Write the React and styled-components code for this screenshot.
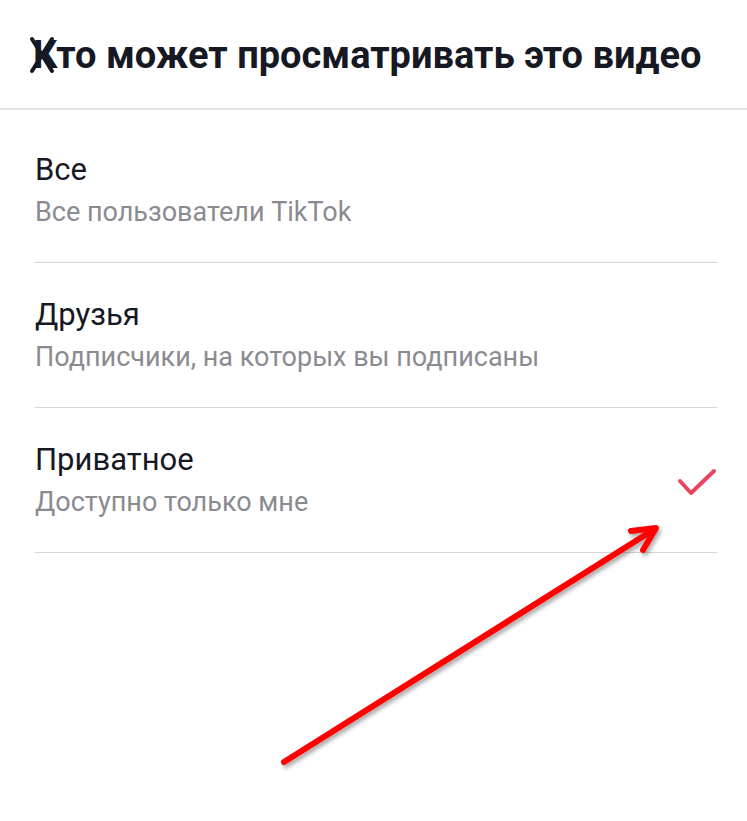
import React from "react";
import styled, { createGlobalStyle } from "styled-components";

const Global = createGlobalStyle`
  html, body {
    margin: 0;
    padding: 0;
    background: #ffffff;
    font-family: Roboto, "Noto Sans", sans-serif;
  }
`;

const Page = styled.div`
  position: relative;
  width: 747px;
  height: 821px;
  background: #fff;
  overflow: hidden;
`;

const Header = styled.div`
  position: relative;
  height: 110px;
  border-bottom: 2px solid #e3e3e4;
  display: flex;
  align-items: center;
  padding-left: 33px;
  box-sizing: border-box;
`;

const Title = styled.h1`
  margin: 0;
  font-size: 38px;
  font-weight: 700;
  color: #161823;
  letter-spacing: 0;
  padding-top: 2px;
`;

const CloseMark = styled.svg`
  position: absolute;
  left: 28px;
  top: 36px;
`;

const List = styled.div`
  padding: 8px 30px 0 35px;
`;

const Row = styled.div`
  display: flex;
  align-items: center;
  justify-content: space-between;
  height: 145px;
  border-bottom: 1px solid #d6d6d8;
  box-sizing: border-box;
`;

const Texts = styled.div`
  display: flex;
  flex-direction: column;
  gap: 8px;
`;

const Name = styled.div`
  font-size: 31px;
  color: #161823;
  line-height: 36px;
`;

const Hint = styled.div`
  font-size: 27px;
  color: #8a8b91;
  line-height: 32px;
`;

const Check = styled.svg`
  margin-top: 6px;
`;

const Arrow = styled.svg`
  position: absolute;
  left: 0;
  top: 0;
  pointer-events: none;
`;

const options = [
  { name: "Все", hint: "Все пользователи TikTok" },
  { name: "Друзья", hint: "Подписчики, на которых вы подписаны" },
  { name: "Приватное", hint: "Доступно только мне", selected: true },
];

export default function App() {
  return (
    <Page>
      <Global />
      <Header>
        <Title>Кто может просматривать это видео</Title>
        <CloseMark width="28" height="38" viewBox="0 0 28 38">
          <path d="M4 3 L24 35 M24 3 L4 35" stroke="#161823" strokeWidth="4" strokeLinecap="round" />
        </CloseMark>
      </Header>
      <List>
        {options.map((o) => (
          <Row key={o.name}>
            <Texts>
              <Name>{o.name}</Name>
              <Hint>{o.hint}</Hint>
            </Texts>
            {o.selected && (
              <Check width="40" height="30" viewBox="0 0 40 30">
                <path d="M3 13 L14 25 L37 3" fill="none" stroke="#ea4560" strokeWidth="4" strokeLinecap="round" strokeLinejoin="round" />
              </Check>
            )}
          </Row>
        ))}
      </List>
      <Arrow width="747" height="821" viewBox="0 0 747 821">
        <defs>
          <filter id="sh" x="-10%" y="-10%" width="120%" height="120%">
            <feDropShadow dx="2" dy="3" stdDeviation="2" floodColor="#000" floodOpacity="0.35" />
          </filter>
        </defs>
        <g filter="url(#sh)" stroke="#ff0000" strokeWidth="6" strokeLinecap="round" fill="none">
          <path d="M284 762 L650 532" />
          <path d="M631 531 L656 528 L643 550" strokeLinejoin="round" />
        </g>
      </Arrow>
    </Page>
  );
}
